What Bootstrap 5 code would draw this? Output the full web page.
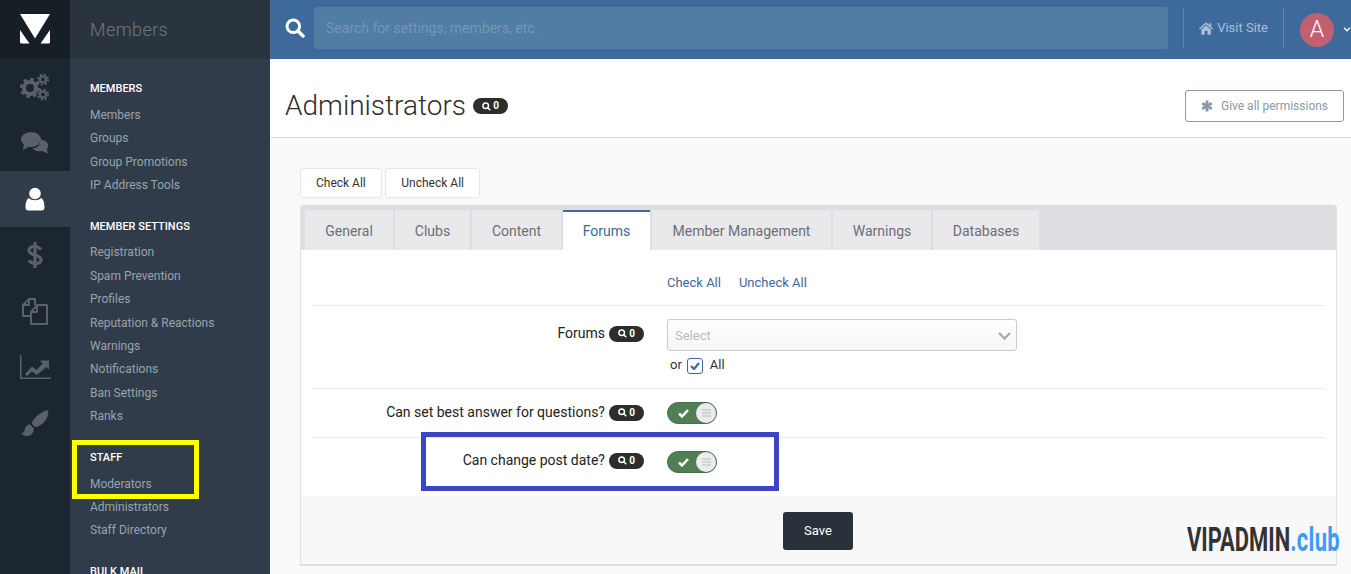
<!DOCTYPE html>
<html lang="en">
<head>
<meta charset="utf-8">
<title>Administrators</title>
<link rel="stylesheet" href="https://cdn.jsdelivr.net/npm/bootstrap@5.3.0/dist/css/bootstrap.min.css">
<style>
html,body{height:100%;overflow:hidden}
body{font-family:Roboto,"Liberation Sans",sans-serif;font-size:13px;color:#222;background:#f9f9f9;position:relative}
a{text-decoration:none}
.shell{height:574px;overflow:hidden}
.rail{width:70px;background:#1c262f;flex:none}
.rail-logo{height:59px;background:#161e26;flex:none}
.rail-item{height:56px;color:#59616a;flex:none}
.rail-item.on{background:#303c4a;color:#fff}
.side{width:200px;background:#303c4a;flex:none;overflow:hidden}
.side-title{height:59px;background:#29343e;color:#6f7880;font-size:18px;font-weight:300;letter-spacing:.4px;padding:0 20px;line-height:59px;flex:none}
.side-nav{padding:18.4px 20px 0;flex:none}
.side-head{color:#fff;font-size:11px;font-weight:500;line-height:24px;height:24px;margin-bottom:2.5px;white-space:nowrap}
.side-link{display:block;color:#9aa3ad;font-size:12px;line-height:23.43px;height:23.43px;white-space:nowrap}
.side-grp{margin-bottom:17.3px}
.topbar{height:59px;background:#3d6a9a;color:#fff;flex:none;padding-bottom:3px}
.search-ico{width:44px;flex:none;padding-left:15px}
.search-box{flex:1;height:42px;background:#517ca3;border-radius:3px;color:#7596b6;font-size:14px;line-height:42px;padding-left:12px;white-space:nowrap}
.top-sep{width:1px;height:40px;background:#5f86ab;flex:none;}
.sep-first{margin-left:15px}
.visit{color:#a9c0d8;font-size:13px;padding:0 15px;white-space:nowrap;width:99px}
.ava{width:34px;height:34px;border-radius:50%;background:#c36070;color:#fff;font-size:23px;font-weight:300;line-height:34px;text-align:center;margin:3px 0 0 16px;flex:none}
.ava-caret{flex:none;margin:3px 0 0 9px}
.head-area{height:79px;background:#fff;border-bottom:1px solid #d9d9d9;padding:16px 7px 0 15px;flex:none}
.page-name{font-size:28px;font-weight:300;color:#2d2d2d;margin:0;line-height:36px}
.pill-dark{display:inline-flex;align-items:center;justify-content:center;gap:2px;width:35px;height:16px;border-radius:8px;background:#2d2d2d;color:#fff;font-size:10px;font-weight:700;line-height:16px;flex:none}
.title-row{gap:7px}
.perm-btn{width:159px;height:32px;border:1px solid #8c99a6;border-radius:3px;background:#fff;color:#8c99a6;font-size:12px}
.content-area{padding:30px 14px 0 30px}
.tool-btn{height:30px;border:1px solid #e6e6e6;border-radius:3px;background:#fff;color:#333;font-size:12px;padding:0 15px;margin-right:3px}
.tool-btn + .tool-btn{padding:0 15.5px}
.tab-panel{margin-top:7px;border:1px solid #e0e0e0;border-top:0;border-bottom:2px solid #e0e0e0;background:#fff;height:361px;overflow:hidden;border-radius:3px 3px 0 0}
.tab-bar{height:45px;background:#dedee2;padding:5px 0 0 4px;gap:2px}
.tab-one{height:40px;background:#e9e9ec;color:#6b6f75;font-size:14px;line-height:43px;text-align:center;flex:none}
.tab-one.on{background:#fff;color:#3d6a9a;border-top:2px solid #3d6a9a;line-height:38px}
.form-line{margin:0 11px;border-bottom:1px solid #ececec;padding-left:355px;position:relative}
.links-line{height:56px;padding-top:10px}
.forums-line{height:83px;padding-top:13px}
.set-line{height:49px}
.date-line{height:58px;padding-bottom:10px}
.line-label{position:absolute;right:calc(100% - 332px);white-space:nowrap;font-size:14px;color:#222;display:flex;align-items:center;gap:4px}
.lab-forums{top:17px}
.lab-set{top:13px}
.lab-date{top:12px}
.blue-link{color:#3d6a9a;font-size:13px;margin-right:18px}
.fake-select{width:350px;height:32px;border:1px solid #ccc;border-radius:3px;background:linear-gradient(#fff,#f6f6f6);color:#bbb;font-size:13px;padding:1px 5px 0 7px}
.or-line{font-size:13px;color:#333;margin:4px 0 0 3px;height:17px}
.tick-box{width:16px;height:16px;border:1px solid #3d6a9a;border-radius:3px;background:#fff;margin:3px 7px 0 5px}
.tog{width:50px;height:22px;border-radius:11px;background:#4f7f52;border:1px solid #44704a;padding:0 0 0 10px}
.tog-knob{width:20px;height:20px;border-radius:50%;background:#ececec}
.panel-foot{height:71px;background:#f8f8f8;padding:16px 1px 0 0}
.save-btn{width:70px;height:38px;background:#29323a;color:#fff;border:0;border-radius:3px;font-size:13px}
.note-y{position:absolute;left:72px;top:440px;width:127px;height:59px;border:5px solid #ff0;pointer-events:none}
.note-b{position:absolute;left:421px;top:432px;width:358px;height:59px;border:5px solid #3c46c4;pointer-events:none}
.stamp{position:absolute;left:1187px;top:519px;font-family:Roboto,sans-serif;font-weight:700;font-size:34px;line-height:40px;color:#333;white-space:nowrap;transform-origin:left center;transform:scaleX(.645)}
.stamp span{color:#3d9bf5;letter-spacing:.5px}
</style>
</head>
<body>
<div class="shell d-flex">
  <nav class="rail d-flex flex-column">
    <div class="rail-logo d-flex align-items-center justify-content-center">
      <svg width="70" height="59" viewBox="0 0 70 59" fill="#fff"><path d="M20 14H50L35 38.500Z"/><path d="M20 30L29.500 43.500H21.500Q20 43.500 20 42Z"/><path d="M50 30L40.500 43.500H48.500Q50 43.500 50 42Z"/></svg>
    </div>
    <div class="rail-item d-flex align-items-center justify-content-center">
      <svg width="30" height="28" viewBox="0 0 30 28" fill="none" stroke="currentColor"><circle cx="10" cy="15" r="6" stroke-width="4"/><circle cx="10" cy="15" r="8.500" stroke-width="3.500" stroke-dasharray="3.300 3.370"/><circle cx="23" cy="6.500" r="3" stroke-width="2.200"/><circle cx="23" cy="6.500" r="5" stroke-width="2.200" stroke-dasharray="2 1.930"/><circle cx="23" cy="21.500" r="3" stroke-width="2.200"/><circle cx="23" cy="21.500" r="5" stroke-width="2.200" stroke-dasharray="2 1.930"/></svg>
    </div>
    <div class="rail-item d-flex align-items-center justify-content-center">
      <svg width="28" height="22" viewBox="0 0 28 22" fill="currentColor"><path d="M19 7.500C26 8 29 13 26 17C26 19 27 20 27.500 21C25 21 23 20 21.500 19C17 20 13 18.500 11.500 16C16 16.500 20 13 19 7.500Z"/><ellipse cx="10" cy="7.500" rx="10" ry="7.500" /><path d="M3 12L2 18L9 14Z"/></svg>
    </div>
    <div class="rail-item on d-flex align-items-center justify-content-center">
      <svg width="20" height="24" viewBox="0 0 20 24" fill="currentColor"><circle cx="10" cy="6.500" r="5.800"/><path d="M4 11C6.500 14 13.500 14 16 11C18.500 12 19.500 16 19.500 20.500Q19.500 23.500 16.500 23.500H3.500Q.5 23.500 .5 20.500C.5 16 1.500 12 4 11Z"/></svg>
    </div>
    <div class="rail-item d-flex align-items-center justify-content-center">
      <svg width="16" height="28" viewBox="0 0 16 28" fill="none" stroke="currentColor" stroke-width="3.200"><path d="M14 8.500C12 6 9.500 5.500 7.500 5.500C4 5.500 2 7.200 2 9.500C2 15 14 13 14 18.700C14 21 12 22.500 8.500 22.500C6 22.500 3.500 21.500 1.700 19.500"/><path d="M8 1V27"/></svg>
    </div>
    <div class="rail-item d-flex align-items-center justify-content-center">
      <svg width="28" height="27" viewBox="0 0 28 27" fill="none" stroke="currentColor" stroke-width="2" stroke-linejoin="round"><path d="M9 18H2V7L8 1H14V7"/><path d="M8 1V7H2"/><path d="M10 26V14L16 7H26V26Z"/><path d="M16 7V14H10"/></svg>
    </div>
    <div class="rail-item d-flex align-items-center justify-content-center">
      <svg width="31" height="24" viewBox="0 0 31 24" fill="currentColor"><path d="M0 0H1.500V22.500H31V24H0Z"/><path d="M5 19L12 11.500L16.500 15L22.500 8.500L20 5.500H29V14.500L26.500 12L16.700 20L12 16.500L7 21Z"/></svg>
    </div>
    <div class="rail-item d-flex align-items-center justify-content-center">
      <svg width="28" height="27" viewBox="0 0 28 27" fill="currentColor"><path d="M27 0.500C28 3 27 7 24 11C21 15 17 17 14 17L10.500 13.500C12 9 16 5.500 20 3C23 1 26 0 27 .5Z"/><path d="M9 14.500L13 18.500C13 23 10 26 6 26C3.500 26 1 25 .5 23C3 23 3.500 21.500 3.700 19.500C4 16.500 6 14.500 9 14.500Z"/></svg>
    </div>
  </nav>

  <aside class="side d-flex flex-column">
    <div class="side-title">Members</div>
    <div class="side-nav">
      <div class="side-grp">
        <div class="side-head">MEMBERS</div>
        <a class="side-link" href="#">Members</a>
        <a class="side-link" href="#">Groups</a>
        <a class="side-link" href="#">Group Promotions</a>
        <a class="side-link" href="#">IP Address Tools</a>
      </div>
      <div class="side-grp">
        <div class="side-head">MEMBER SETTINGS</div>
        <a class="side-link" href="#">Registration</a>
        <a class="side-link" href="#">Spam Prevention</a>
        <a class="side-link" href="#">Profiles</a>
        <a class="side-link" href="#">Reputation &amp; Reactions</a>
        <a class="side-link" href="#">Warnings</a>
        <a class="side-link" href="#">Notifications</a>
        <a class="side-link" href="#">Ban Settings</a>
        <a class="side-link" href="#">Ranks</a>
      </div>
      <div class="side-grp">
        <div class="side-head">STAFF</div>
        <a class="side-link" href="#">Moderators</a>
        <a class="side-link" href="#">Administrators</a>
        <a class="side-link" href="#">Staff Directory</a>
      </div>
      <div class="side-grp">
        <div class="side-head">BULK MAIL</div>
      </div>
    </div>
  </aside>

  <main class="flex-grow-1 d-flex flex-column" style="min-width:0">
    <header class="topbar d-flex align-items-center">
      <div class="search-ico d-flex align-items-center">
        <svg width="20" height="20" viewBox="0 0 20 20" fill="none" stroke="#fff"><circle cx="8.300" cy="8.300" r="6.300" stroke-width="3"/><path d="M13 13L18 18" stroke-width="3.500" stroke-linecap="round"/></svg>
      </div>
      <div class="search-box">Search for settings, members, etc.</div>
      <div class="top-sep sep-first"></div>
      <a class="visit d-flex align-items-center gap-1" href="#">
        <svg width="15" height="13" viewBox="0 0 15 13" fill="#a9c0d8"><path d="M7.500 0L15 6.500L14 7.500L7.500 2L1 7.500L0 6.500Z"/><path d="M2.500 7.500L7.500 3.200L12.500 7.500V13H9V9H6V13H2.500Z"/><path d="M11 1H13V4.500L11 3Z"/></svg>Visit Site
      </a>
      <div class="top-sep"></div>
      <div class="ava">A</div>
      <svg class="ava-caret" width="8" height="5" viewBox="0 0 7 5" fill="none" stroke="#fff" stroke-width="1.300"><path d="M.5 .8L3.500 3.800L6.500 .8"/></svg>
    </header>

    <section class="head-area d-flex align-items-center justify-content-between">
      <div class="d-flex align-items-center title-row">
        <h1 class="page-name">Administrators</h1>
        <span class="pill-dark"><svg width="9" height="9" viewBox="0 0 9 9" fill="none" stroke="#fff" stroke-width="1.500"><circle cx="3.700" cy="3.700" r="2.800"/><path d="M5.800 5.800L8.300 8.300"/></svg>0</span>
      </div>
      <button class="perm-btn d-flex align-items-center justify-content-center gap-2" type="button">
        <svg width="12" height="12" viewBox="0 0 12 12" stroke="#8c99a6" stroke-width="2.800"><path d="M6 .5V11.500M1.200 3.200L10.800 8.800M10.800 3.200L1.200 8.800"/></svg>Give all permissions
      </button>
    </section>

    <section class="content-area flex-grow-1">
      <div class="d-flex">
        <button class="tool-btn" type="button">Check All</button>
        <button class="tool-btn" type="button">Uncheck All</button>
      </div>
      <div class="tab-panel">
        <div class="tab-bar d-flex">
          <div class="tab-one" style="width:88px">General</div>
          <div class="tab-one" style="width:75px">Clubs</div>
          <div class="tab-one" style="width:89px">Content</div>
          <div class="tab-one on" style="width:87px">Forums</div>
          <div class="tab-one" style="width:179px">Member Management</div>
          <div class="tab-one" style="width:98px">Warnings</div>
          <div class="tab-one" style="width:106px">Databases</div>
        </div>
        <div class="form-line links-line d-flex align-items-center">
          <a class="blue-link" href="#">Check All</a><a class="blue-link" href="#">Uncheck All</a>
        </div>
        <div class="form-line forums-line">
          <div class="line-label lab-forums">Forums <span class="pill-dark"><svg width="9" height="9" viewBox="0 0 9 9" fill="none" stroke="#fff" stroke-width="1.500"><circle cx="3.700" cy="3.700" r="2.800"/><path d="M5.800 5.800L8.300 8.300"/></svg>0</span></div>
          <div class="fake-select d-flex align-items-center justify-content-between">Select
            <svg width="13" height="8" viewBox="0 0 13 8" fill="none" stroke="#aaa" stroke-width="2.400"><path d="M1 1L6.500 6.500L12 1"/></svg>
          </div>
          <div class="or-line d-flex align-items-start">or
            <span class="tick-box d-inline-flex align-items-center justify-content-center"><svg width="10" height="8" viewBox="0 0 10 8" fill="none" stroke="#3d6a9a" stroke-width="2.200"><path d="M1 4L4 7L9 1"/></svg></span>All
          </div>
        </div>
        <div class="form-line set-line d-flex align-items-center">
          <div class="line-label lab-set">Can set best answer for questions? <span class="pill-dark"><svg width="9" height="9" viewBox="0 0 9 9" fill="none" stroke="#fff" stroke-width="1.500"><circle cx="3.700" cy="3.700" r="2.800"/><path d="M5.800 5.800L8.300 8.300"/></svg>0</span></div>
          <div class="tog d-flex align-items-center justify-content-between">
            <svg width="11" height="9" viewBox="0 0 11 9" fill="none" stroke="#fff" stroke-width="2.500"><path d="M1 4.500L4 7.500L10 1"/></svg>
            <span class="tog-knob d-flex align-items-center justify-content-center"><svg width="9" height="8" viewBox="0 0 9 8" stroke="#bbb"><path d="M0 1H9M0 4H9M0 7H9"/></svg></span>
          </div>
        </div>
        <div class="form-line date-line d-flex align-items-center border-0">
          <div class="line-label lab-date">Can change post date? <span class="pill-dark"><svg width="9" height="9" viewBox="0 0 9 9" fill="none" stroke="#fff" stroke-width="1.500"><circle cx="3.700" cy="3.700" r="2.800"/><path d="M5.800 5.800L8.300 8.300"/></svg>0</span></div>
          <div class="tog d-flex align-items-center justify-content-between">
            <svg width="11" height="9" viewBox="0 0 11 9" fill="none" stroke="#fff" stroke-width="2.500"><path d="M1 4.500L4 7.500L10 1"/></svg>
            <span class="tog-knob d-flex align-items-center justify-content-center"><svg width="9" height="8" viewBox="0 0 9 8" stroke="#bbb"><path d="M0 1H9M0 4H9M0 7H9"/></svg></span>
          </div>
        </div>
        <div class="panel-foot d-flex justify-content-center">
          <button class="save-btn" type="button">Save</button>
        </div>
      </div>
    </section>
  </main>
</div>
<div class="note-y"></div>
<div class="note-b"></div>
<div class="stamp">VIPADMIN<span>.club</span></div>
<script src="https://cdn.jsdelivr.net/npm/bootstrap@5.3.0/dist/js/bootstrap.bundle.min.js"></script>
</body>
</html>
